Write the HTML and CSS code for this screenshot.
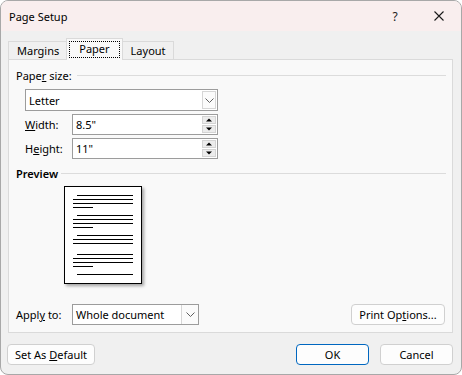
FILE: index.html
```html
<!DOCTYPE html>
<html lang="en">
<head>
    <meta charset="UTF-8">
    <title>Page Setup</title>
    <link rel="stylesheet" href="styles.css">
</head>
<body>
    <div class="window">
        <div class="titlebar">
            <div class="title">Page Setup</div>
            <div class="title-btn help">?</div>
            <div class="title-btn close">
                <svg width="10" height="10" viewBox="0 0 10 10">
                    <path d="M0.5 0.5 L9.5 9.5 M9.5 0.5 L0.5 9.5" stroke="#1a1a1a" stroke-width="1.1" fill="none"/>
                </svg>
            </div>
        </div>

        <div class="content">
            <div class="tabs">
                <div class="tab">Margins</div>
                <div class="tab active"><span class="focus">Paper</span></div>
                <div class="tab">Layout</div>
            </div>

            <div class="panel">
                <div class="group-head">
                    <span>Pape<u>r</u> size:</span>
                    <div class="rule"></div>
                </div>

                <div class="indent">
                    <div class="combo wide">
                        <span class="value">Letter</span>
                        <div class="drop">
                            <svg width="9" height="5" viewBox="0 0 9 5"><path d="M0.5 0.5 L4.5 4.5 L8.5 0.5" stroke="#606060" fill="none"/></svg>
                        </div>
                    </div>

                    <div class="field-row">
                        <label class="field-label"><u>W</u>idth:</label>
                        <div class="spin-input">
                            <span class="value">8.5"</span>
                            <div class="spinner">
                                <div class="spin-btn"><svg width="6" height="4" viewBox="0 0 6 4"><path d="M0 3.5 L3 0.5 L6 3.5 Z" fill="#000"/></svg></div>
                                <div class="spin-btn"><svg width="6" height="4" viewBox="0 0 6 4"><path d="M0 0.5 L3 3.5 L6 0.5 Z" fill="#000"/></svg></div>
                            </div>
                        </div>
                    </div>

                    <div class="field-row">
                        <label class="field-label">H<u>e</u>ight:</label>
                        <div class="spin-input">
                            <span class="value">11"</span>
                            <div class="spinner">
                                <div class="spin-btn"><svg width="6" height="4" viewBox="0 0 6 4"><path d="M0 3.5 L3 0.5 L6 3.5 Z" fill="#000"/></svg></div>
                                <div class="spin-btn"><svg width="6" height="4" viewBox="0 0 6 4"><path d="M0 0.5 L3 3.5 L6 0.5 Z" fill="#000"/></svg></div>
                            </div>
                        </div>
                    </div>
                </div>

                <div class="group-head preview-head">
                    <span>Preview</span>
                    <div class="rule"></div>
                </div>

                <div class="page">
                    <div class="line short-left"></div>
                    <div class="line"></div>
                    <div class="line"></div>
                    <div class="line stub"></div>
                    <div class="line short-left para"></div>
                    <div class="line"></div>
                    <div class="line"></div>
                    <div class="line stub"></div>
                    <div class="line short-left para"></div>
                    <div class="line"></div>
                    <div class="line"></div>
                    <div class="line short-left para2"></div>
                    <div class="line"></div>
                    <div class="line"></div>
                    <div class="line stub"></div>
                    <div class="line short-left para"></div>
                </div>

                <div class="apply-row">
                    <label class="apply-label">Appl<u>y</u> to:</label>
                    <div class="combo apply">
                        <span class="value">Whole document</span>
                        <div class="drop">
                            <svg width="9" height="5" viewBox="0 0 9 5"><path d="M0.5 0.5 L4.5 4.5 L8.5 0.5" stroke="#606060" fill="none"/></svg>
                        </div>
                    </div>
                    <div class="btn print"><span>Print Op<u>t</u>ions...</span></div>
                </div>
            </div>

            <div class="footer">
                <div class="btn default-btn"><span>Set As <u>D</u>efault</span></div>
                <div class="btn ok">OK</div>
                <div class="btn cancel">Cancel</div>
            </div>
        </div>
    </div>
</body>
</html>
```

FILE: styles.css
```css
body {
    margin: 0;
    padding: 0;
    background-color: #ffffff;
    font-family: 'Noto Sans', 'Open Sans', sans-serif;
    font-size: 11px;
    color: #000;
}

.window {
    width: 462px;
    height: 375px;
    box-sizing: border-box;
    border: 1px solid #a8a8a8;
    border-radius: 8px;
    overflow: hidden;
    background-color: #f0f0f0;
}

/* Title bar */
.titlebar {
    height: 30px;
    background-color: #f9eeee;
    display: flex;
    align-items: center;
    padding-left: 8px;
}

.title {
    flex: 1;
    font-size: 11px;
}

.title-btn {
    width: 44px;
    height: 30px;
    display: flex;
    justify-content: center;
    align-items: center;
    color: #1a1a1a;
}

.help {
    font-size: 12px;
}

/* Content */
.content {
    padding: 0 8px 0 7px;
}

.tabs {
    margin-top: 7px;
    height: 21px;
    display: flex;
    align-items: flex-end;
}

.tab {
    height: 18px;
    box-sizing: border-box;
    border: 1px solid #dadada;
    border-bottom: none;
    padding: 0 7px 0 8px;
    display: flex;
    align-items: center;
    background-color: #f0f0f0;
}

.tab + .tab {
    margin-left: -1px;
}

.tab.active {
    height: 22px;
    margin-bottom: -1px;
    background-color: #f9f9f9;
    padding: 0 3px;
    position: relative;
    z-index: 1;
}

.focus {
    outline: 1px dotted #000;
    padding: 0 9px 1px 9px;
    line-height: 14px;
}

.panel {
    height: 274px;
    box-sizing: border-box;
    border: 1px solid #dadada;
    background-color: #f9f9f9;
    padding: 0 6px 0 7px;
}

.group-head {
    height: 16px;
    margin-top: 7px;
    display: flex;
    align-items: center;
}

.rule {
    flex: 1;
    height: 1px;
    background-color: #dcdcdc;
    margin-left: 5px;
}

.preview-head {
    margin-top: 6px;
    font-weight: 600;
}

.preview-head .rule {
    margin-left: 3px;
}

.indent {
    padding-left: 9px;
}

/* Inputs */
.combo,
.spin-input {
    box-sizing: border-box;
    border: 1px solid #9c9c9c;
    background-color: #fff;
    display: flex;
    align-items: center;
}

.combo.wide {
    width: 193px;
    height: 22px;
    margin-top: 6px;
}

.value {
    flex: 1;
    padding-left: 3px;
}

.drop {
    width: 14px;
    height: 18px;
    margin-right: 1px;
    box-sizing: border-box;
    border: 1px solid #d6d6d6;
    background-color: #fbfbfb;
    display: flex;
    justify-content: center;
    align-items: center;
}

.field-row {
    display: flex;
    align-items: center;
    margin-top: 3px;
}

.field-label {
    width: 47px;
}

.spin-input {
    width: 146px;
    height: 21px;
}

.spinner {
    width: 14px;
    margin-right: 1px;
    display: flex;
    flex-direction: column;
    gap: 1px;
}

.spin-btn {
    height: 8px;
    box-sizing: border-box;
    border: 1px solid #d4d4d4;
    background-color: #ececec;
    display: flex;
    justify-content: center;
    align-items: center;
}

/* Preview page */
.page {
    width: 78px;
    height: 98px;
    box-sizing: border-box;
    margin: 5px 0 0 48px;
    border: 1px solid #000;
    background-color: #fff;
    box-shadow: 2px 2px 3px rgba(0, 0, 0, 0.35);
    padding: 8px 8px 0 8px;
}

.line {
    height: 1px;
    background-color: #000;
    margin-top: 3px;
}

.line:first-child {
    margin-top: 0;
}

.short-left {
    margin-left: 4px;
}

.stub {
    width: 20px;
}

.para {
    margin-top: 7px;
}

.para2 {
    margin-top: 10px;
}

/* Apply row */
.apply-row {
    display: flex;
    align-items: center;
    margin-top: 20px;
}

.apply-label {
    width: 56px;
}

.combo.apply {
    width: 127px;
    height: 21px;
}

.combo.apply .drop {
    width: 17px;
    height: 19px;
    border-width: 0 0 0 1px;
    margin-right: 0;
}

/* Buttons */
.btn {
    height: 21px;
    box-sizing: border-box;
    border: 1px solid #d0d0d0;
    border-radius: 4px;
    background-color: #fdfdfd;
    display: flex;
    justify-content: center;
    align-items: center;
}

.print {
    width: 94px;
    margin-left: auto;
    margin-right: 1px;
}

.footer {
    display: flex;
    margin-top: 11px;
}

.default-btn {
    width: 88px;
    margin-left: -1px;
}

.ok {
    width: 73px;
    margin-left: auto;
    border-color: #0067c0;
}

.cancel {
    width: 73px;
    margin-left: 11px;
}
```
